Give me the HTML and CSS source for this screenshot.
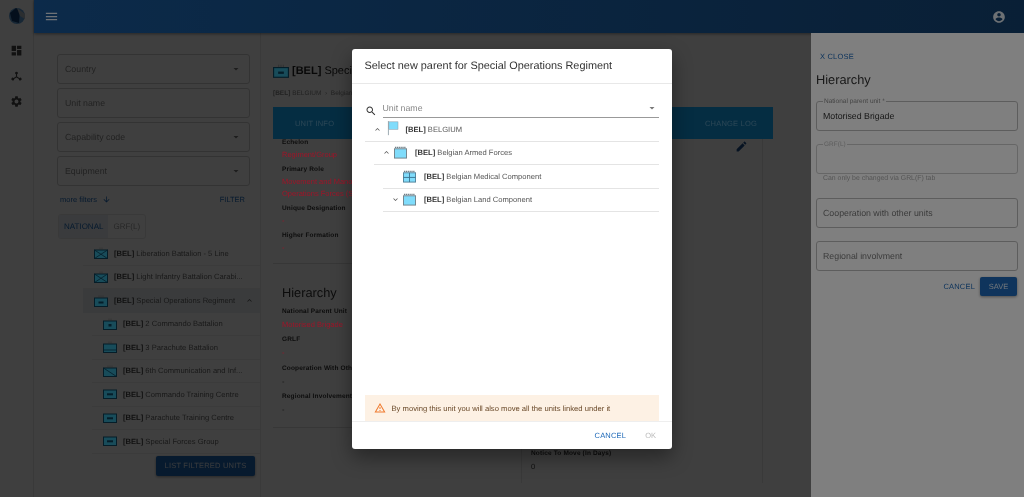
FILE: index.html
```html
<!DOCTYPE html>
<html lang="en">
<head>
    <meta charset="UTF-8">
    <title>Hierarchy - Select new parent</title>
    <link rel="stylesheet" href="styles.css">
</head>
<body>
    <svg class="defs" width="0" height="0">
        <symbol id="caret" viewBox="0 0 24 24"><path d="M7 10l5 5 5-5z"/></symbol>
        <symbol id="less" viewBox="0 0 24 24"><path d="M12 8l-6 6 1.41 1.41L12 10.83l4.59 4.58L18 14z"/></symbol>
        <symbol id="more" viewBox="0 0 24 24"><path d="M16.59 8.59L12 13.17 7.41 8.59 6 10l6 6 6-6z"/></symbol>
        <symbol id="unit-x" viewBox="0 0 14 12"><rect x=".5" y="3" width="13" height="8.5" fill="#3098b4" stroke="#0a3a50"/><path d="M.5 3l13 8.5M13.5 3L.5 11.5" stroke="#0a3a50" stroke-width=".8"/><path d="M6 .5v2M8 .5v2" stroke="#555" stroke-width=".6"/></symbol>
        <symbol id="unit-sof" viewBox="0 0 14 12"><rect x=".5" y="3" width="13" height="8.5" fill="#3098b4" stroke="#0a3a50"/><rect x="4.5" y="6.5" width="5" height="2" fill="#0a3a50"/><path d="M5 .5v2M7 .5v2M9 .5v2" stroke="#555" stroke-width=".6"/></symbol>
        <symbol id="unit-bn" viewBox="0 0 14 12"><rect x=".5" y="3" width="13" height="8.5" fill="#3098b4" stroke="#0a3a50"/><rect x="5.5" y="6" width="3" height="2.5" fill="#0a3a50"/><path d="M6 .5v2M8 .5v2" stroke="#555" stroke-width=".6"/></symbol>
        <symbol id="unit-para" viewBox="0 0 14 12"><rect x=".5" y="3" width="13" height="8.5" fill="#3098b4" stroke="#0a3a50"/><path d="M.5 9h13" stroke="#0a3a50" stroke-width=".8"/><path d="M6 .5v2M8 .5v2" stroke="#555" stroke-width=".6"/></symbol>
        <symbol id="unit-sig" viewBox="0 0 14 12"><rect x=".5" y="3" width="13" height="8.5" fill="#3098b4" stroke="#0a3a50"/><path d="M.5 3l13 8.5" stroke="#0a3a50" stroke-width=".8"/><path d="M5 .5v2M7 .5v2M9 .5v2" stroke="#555" stroke-width=".6"/></symbol>
        <symbol id="unit-train" viewBox="0 0 14 12"><rect x=".5" y="2" width="13" height="8.5" fill="#3098b4" stroke="#0a3a50"/><rect x="4" y="5.3" width="6" height="2" fill="#0a3a50"/></symbol>
        <symbol id="nation" viewBox="0 0 14 18"><rect x="2" y="1" width="11" height="9" fill="#80dcfb" stroke="#8a9aa3" stroke-width=".6"/><path d="M1.5 0v17" stroke="#8a9aa3" stroke-width="1"/></symbol>
        <symbol id="force" viewBox="0 0 14 13"><rect x=".5" y="2.5" width="13" height="10" fill="#80dcfb" stroke="#6f7f88"/><path d="M1 1h12" stroke="#6f7f88" stroke-width="1.4" stroke-dasharray="1.4 .6"/></symbol>
        <symbol id="medical" viewBox="0 0 14 13"><rect x=".5" y="2.5" width="13" height="10" fill="#80dcfb" stroke="#4f7f98"/><path d="M1 1h12" stroke="#6f7f88" stroke-width="1.4" stroke-dasharray="1.4 .6"/><path d="M.5 7.5h13M7 2.5v10" stroke="#3a7390" stroke-width="1"/></symbol>
    </svg>

    <div class="app">
        <aside class="rail">
            <svg class="logo" viewBox="0 0 16 16"><circle cx="8" cy="8" r="8" fill="#5f9ed6"/><path d="M1 5l6-5 4 3-1 12-7-2z" fill="#123f73"/><path d="M8 0l8 6v5l-5-3z" fill="#aeb8c2"/></svg>
            <svg class="rail-icon" viewBox="0 0 24 24"><path d="M3 13h8V3H3v10zm0 8h8v-6H3v6zm10 0h8V11h-8v10zm0-18v6h8V3h-8z"/></svg>
            <svg class="rail-icon" viewBox="0 0 24 24"><path d="M12 3a2.6 2.6 0 0 1 1 5v4.2l4.3 2.5a2.6 2.6 0 1 1-1 1.7L12 13.9l-4.3 2.5a2.6 2.6 0 1 1-1-1.7l4.3-2.5V8a2.6 2.6 0 0 1 1-5z"/></svg>
            <svg class="rail-icon" viewBox="0 0 24 24"><path d="M19.14 12.94c.04-.3.06-.61.06-.94 0-.32-.02-.64-.07-.94l2.03-1.58c.18-.14.23-.41.12-.61l-1.92-3.32c-.12-.22-.37-.29-.59-.22l-2.39.96c-.5-.38-1.03-.7-1.62-.94l-.36-2.54c-.04-.24-.24-.41-.48-.41h-3.84c-.24 0-.43.17-.47.41l-.36 2.54c-.59.24-1.13.57-1.62.94l-2.39-.96c-.22-.08-.47 0-.59.22L2.74 8.87c-.12.21-.08.47.12.61l2.03 1.58c-.05.3-.09.63-.09.94s.02.64.07.94l-2.03 1.58c-.18.14-.23.41-.12.61l1.92 3.32c.12.22.37.29.59.22l2.39-.96c.5.38 1.03.7 1.62.94l.36 2.54c.05.24.24.41.48.41h3.84c.24 0 .44-.17.47-.41l.36-2.54c.59-.24 1.13-.56 1.62-.94l2.39.96c.22.08.47 0 .59-.22l1.92-3.32c.12-.22.07-.47-.12-.61l-2.01-1.58zM12 15.6c-1.98 0-3.6-1.62-3.6-3.6s1.62-3.6 3.6-3.6 3.6 1.62 3.6 3.6-1.62 3.6-3.6 3.6z"/></svg>
        </aside>

        <div class="page">
            <header class="topbar">
                <svg class="menu-icon" viewBox="0 0 24 24"><path d="M3 18h18v-2H3v2zm0-5h18v-2H3v2zm0-7v2h18V6H3z"/></svg>
                <svg class="user-icon" viewBox="0 0 24 24"><path d="M12 2C6.48 2 2 6.48 2 12s4.48 10 10 10 10-4.48 10-10S17.52 2 12 2zm0 3c1.66 0 3 1.34 3 3s-1.34 3-3 3-3-1.34-3-3 1.34-3 3-3zm0 14.2c-2.5 0-4.71-1.28-6-3.22.03-1.99 4-3.08 6-3.08 1.99 0 5.97 1.09 6 3.08-1.29 1.94-3.5 3.22-6 3.22z"/></svg>
            </header>

            <div class="workspace">
                <section class="filters">
                    <div class="field"><span>Country</span><svg class="caret"><use href="#caret"/></svg></div>
                    <div class="field"><span>Unit name</span></div>
                    <div class="field"><span>Capability code</span><svg class="caret"><use href="#caret"/></svg></div>
                    <div class="field"><span>Equipment</span><svg class="caret"><use href="#caret"/></svg></div>
                    <div class="filter-links">
                        <span class="more-filters">more filters
                            <svg viewBox="0 0 24 24"><path d="M20 12l-1.41-1.41L13 16.17V4h-2v12.17l-5.58-5.59L4 12l8 8 8-8z"/></svg>
                        </span>
                        <span class="filter-btn">FILTER</span>
                    </div>
                    <div class="toggle">
                        <span class="toggle-on">NATIONAL</span>
                        <span>GRF(L)</span>
                    </div>
                    <ul class="unit-list">
                        <li class="unit"><svg class="unit-icon"><use href="#unit-x"/></svg><span><b>[BEL]</b> Liberation Battalion - 5 Line</span></li>
                        <li class="unit"><svg class="unit-icon"><use href="#unit-x"/></svg><span><b>[BEL]</b> Light Infantry Battalion Carabi...</span></li>
                        <li class="unit unit-open"><svg class="unit-icon"><use href="#unit-sof"/></svg><span><b>[BEL]</b> Special Operations Regiment</span><svg class="unit-chevron"><use href="#less"/></svg></li>
                        <li class="unit unit-child"><svg class="unit-icon"><use href="#unit-bn"/></svg><span><b>[BEL]</b> 2 Commando Battalion</span></li>
                        <li class="unit unit-child"><svg class="unit-icon"><use href="#unit-para"/></svg><span><b>[BEL]</b> 3 Parachute Battalion</span></li>
                        <li class="unit unit-child"><svg class="unit-icon"><use href="#unit-sig"/></svg><span><b>[BEL]</b> 6th Communication and Inf...</span></li>
                        <li class="unit unit-child"><svg class="unit-icon"><use href="#unit-train"/></svg><span><b>[BEL]</b> Commando Training Centre</span></li>
                        <li class="unit unit-child"><svg class="unit-icon"><use href="#unit-train"/></svg><span><b>[BEL]</b> Parachute Training Centre</span></li>
                        <li class="unit unit-child"><svg class="unit-icon"><use href="#unit-train"/></svg><span><b>[BEL]</b> Special Forces Group</span></li>
                    </ul>
                    <div class="list-btn">LIST FILTERED UNITS</div>
                </section>

                <section class="details">
                    <h1 class="unit-title"><svg class="title-icon"><use href="#unit-sof"/></svg><span><b>[BEL]</b> Special Operations Regiment</span></h1>
                    <div class="crumbs"><b>[BEL]</b> BELGIUM &nbsp;›&nbsp; Belgian Armed Forces</div>
                    <div class="tabs"><span>UNIT INFO</span><span>CHANGE LOG</span></div>
                    <div class="info-grid">
                        <div class="info-col">
                            <div class="info-block">
                                <h4>Echelon</h4>
                                <p class="red">Regiment/Group</p>
                                <h4>Primary Role</h4>
                                <p class="red">Movement and Manoeuvre<br>Operations Forces (SOF)</p>
                                <h4>Unique Designation</h4>
                                <p class="red">-</p>
                                <h4>Higher Formation</h4>
                                <p class="red">-</p>
                            </div>
                            <div class="info-block hierarchy">
                                <h2>Hierarchy</h2>
                                <h4>National Parent Unit</h4>
                                <p class="red">Motorised Brigade</p>
                                <h4>GRLF</h4>
                                <p class="red">-</p>
                                <h4>Cooperation With Other Units</h4>
                                <p>-</p>
                                <h4>Regional Involvement</h4>
                                <p>-</p>
                            </div>
                        </div>
                        <div class="info-side">
                            <svg class="edit-icon" viewBox="0 0 24 24"><path d="M3 17.25V21h3.75L17.81 9.94l-3.75-3.75L3 17.25zM20.71 7.04c.39-.39.39-1.02 0-1.41l-2.34-2.34c-.39-.39-1.02-.39-1.41 0l-1.83 1.83 3.75 3.75 1.83-1.83z"/></svg>
                            <div class="notice">
                                <h4>Notice To Move (In Days)</h4>
                                <p>0</p>
                            </div>
                        </div>
                    </div>
                </section>
            </div>
        </div>

        <div class="scrim scrim-low"></div>

        <aside class="drawer">
            <a class="close-link">X CLOSE</a>
            <h2>Hierarchy</h2>
            <div class="outlined"><label>National parent unit *</label><span class="value">Motorised Brigade</span></div>
            <div class="outlined outlined-off"><label>GRF(L)</label></div>
            <small>Can only be changed via GRL(F) tab</small>
            <div class="outlined"><span>Cooperation with other units</span></div>
            <div class="outlined"><span>Regional involvment</span></div>
            <div class="drawer-actions">
                <span class="text-btn">CANCEL</span>
                <span class="save-btn">SAVE</span>
            </div>
        </aside>

        <div class="scrim scrim-top"></div>

        <div class="dialog">
            <div class="dialog-title">Select new parent for Special Operations Regiment</div>
            <div class="dialog-body">
                <div class="search">
                    <svg class="search-icon" viewBox="0 0 24 24"><path d="M15.5 14h-.79l-.28-.27C15.41 12.59 16 11.11 16 9.5 16 5.91 13.09 3 9.5 3S3 5.91 3 9.5 5.91 16 9.5 16c1.61 0 3.09-.59 4.23-1.57l.27.28v.79l5 4.99L20.49 19l-4.99-5zm-6 0C7.01 14 5 11.99 5 9.5S7.01 5 9.5 5 14 7.01 14 9.5 11.99 14 9.5 14z"/></svg>
                    <div class="search-input"><span>Unit name</span><svg class="caret"><use href="#caret"/></svg></div>
                </div>
                <ul class="tree">
                    <li class="tree-row"><svg class="tree-chevron"><use href="#less"/></svg><svg class="tree-flag"><use href="#nation"/></svg><span><b>[BEL]</b> BELGIUM</span></li>
                    <li class="tree-row level-1"><svg class="tree-chevron"><use href="#less"/></svg><svg class="tree-icon"><use href="#force"/></svg><span><b>[BEL]</b> Belgian Armed Forces</span></li>
                    <li class="tree-row level-2"><span class="tree-chevron"></span><svg class="tree-icon"><use href="#medical"/></svg><span><b>[BEL]</b> Belgian Medical Component</span></li>
                    <li class="tree-row level-2"><svg class="tree-chevron"><use href="#more"/></svg><svg class="tree-icon"><use href="#force"/></svg><span><b>[BEL]</b> Belgian Land Component</span></li>
                </ul>
                <div class="alert">
                    <svg viewBox="0 0 24 24"><path d="M1 21h22L12 2 1 21zm3.47-2L12 5.99 19.53 19H4.47zM11 16h2v2h-2zm0-6h2v4h-2z"/></svg>
                    <span>By moving this unit you will also move all the units linked under it</span>
                </div>
            </div>
            <div class="dialog-actions">
                <span class="text-btn">CANCEL</span>
                <span class="ok-btn">OK</span>
            </div>
        </div>
    </div>
</body>
</html>
```

FILE: styles.css
```css
/* General */
html, body {
    margin: 0;
    padding: 0;
    height: 497px;
    overflow: hidden;
}

body {
    font-family: "Liberation Sans", Arial, sans-serif;
    color: #333;
    background: white;
    text-rendering: geometricPrecision;
}

.defs {
    position: absolute;
}

.app {
    position: relative;
    display: flex;
    width: 1024px;
    height: 497px;
    overflow: hidden;
    background: white;
    filter: blur(0.45px);
}

.scrim {
    position: absolute;
    inset: 0;
    background: rgba(0, 0, 0, 0.5);
}

.scrim-low {
    z-index: 1;
}

.scrim-top {
    z-index: 3;
}

/* Rail */
.rail {
    width: 34px;
    flex: none;
    display: flex;
    flex-direction: column;
    align-items: center;
    border-right: 1px solid #e4e4e4;
    box-sizing: border-box;
}

.logo {
    width: 16px;
    height: 16px;
    margin: 8px 0 20px;
}

.rail-icon {
    width: 13px;
    height: 13px;
    margin-bottom: 12.5px;
    fill: #444;
}

/* Top bar */
.page {
    flex: 1;
    display: flex;
    flex-direction: column;
    min-width: 0;
}

.topbar {
    position: relative;
    z-index: 2;
    height: 33px;
    flex: none;
    display: flex;
    align-items: center;
    justify-content: space-between;
    padding: 0 8px 0 10px;
    background: linear-gradient(to right, #185594, #133f6c);
    box-shadow: 0 1px 3px rgba(0, 0, 0, 0.4);
}

.menu-icon {
    width: 15px;
    height: 15px;
    fill: white;
    opacity: 0.85;
}

.user-icon {
    width: 14px;
    height: 14px;
    fill: white;
    opacity: 0.85;
    margin-right: 10px;
}

.workspace {
    flex: 1;
    display: flex;
    min-height: 0;
}

/* Filters */
.filters {
    width: 227px;
    flex: none;
    box-sizing: border-box;
    padding: 21px 10px 0 23px;
    border-right: 1px solid #e8e8e8;
}

.field {
    height: 30px;
    box-sizing: border-box;
    margin-bottom: 4px;
    padding: 0 7px;
    display: flex;
    align-items: center;
    justify-content: space-between;
    border: 1px solid #ccc;
    border-radius: 3px;
    font-size: 8.8px;
    color: #888;
}

.caret {
    width: 12px;
    height: 12px;
    fill: #777;
    flex: none;
}

.filter-links {
    display: flex;
    align-items: center;
    justify-content: space-between;
    height: 18px;
    padding: 0 5px 0 3px;
    margin-top: 3px;
    font-size: 7.5px;
    color: #1e69b8;
}

.more-filters {
    display: flex;
    align-items: center;
    gap: 5px;
}

.more-filters svg {
    width: 9px;
    height: 9px;
    fill: #1e69b8;
}

.toggle {
    display: inline-flex;
    height: 25px;
    margin: 6px 0 0 1px;
    font-size: 8px;
    color: #999;
    border: 1px solid #e4e4e4;
    border-radius: 3px;
    box-sizing: border-box;
}

.toggle span {
    display: flex;
    align-items: center;
    padding: 0 5px;
}

.toggle .toggle-on {
    background: #e8eef5;
    color: #1e69b8;
}

.unit-list {
    list-style: none;
    margin: 3px -10px 0 26px;
    padding: 0;
}

.unit {
    height: 23.5px;
    box-sizing: border-box;
    display: flex;
    align-items: center;
    gap: 6px;
    padding-left: 11px;
    font-size: 7.6px;
    color: #666;
    border-bottom: 1px solid #eee;
    white-space: nowrap;
}

.unit b {
    color: #444;
}

.unit-open {
    background: #e8eef3;
    border-bottom: none;
}

.unit-child {
    margin-left: 9px;
}

.unit-icon {
    position: relative;
    z-index: 2;
    width: 14px;
    height: 12px;
    flex: none;
}

.unit-chevron {
    width: 9px;
    height: 9px;
    fill: #555;
    margin-left: auto;
    margin-right: 6px;
}

.list-btn {
    width: 99px;
    height: 20px;
    margin: 2px 0 0 99px;
    display: flex;
    align-items: center;
    justify-content: center;
    background: #1e69b8;
    border-radius: 2px;
    color: rgba(255, 255, 255, 0.85);
    font-size: 7.5px;
    letter-spacing: 0.2px;
    box-shadow: 0 1px 3px rgba(0, 0, 0, 0.4);
}

/* Details */
.details {
    flex: 1;
    min-width: 0;
    padding: 0 0 0 12px;
}

.unit-title {
    display: flex;
    align-items: center;
    gap: 3px;
    height: 24px;
    margin: 26px 0 0;
    font-size: 11px;
    font-weight: normal;
    color: #222;
    white-space: nowrap;
}

.title-icon {
    position: relative;
    z-index: 2;
    width: 16px;
    height: 14px;
}

.crumbs {
    margin-top: 7px;
    height: 17px;
    font-size: 6.5px;
    color: #888;
}

.tabs {
    position: relative;
    z-index: 2;
    width: 500px;
    height: 32px;
    display: flex;
    align-items: center;
    justify-content: space-between;
    padding: 0 16px 0 22px;
    box-sizing: border-box;
    background: #0a5a85;
    color: rgba(255, 255, 255, 0.3);
    font-size: 7.5px;
    letter-spacing: 0.2px;
}

.info-grid {
    display: flex;
    width: 490px;
    height: 345px;
    margin-top: -1px;
}

.info-col {
    width: 248px;
    flex: none;
}

.info-block {
    padding: 0 0 4.5px 9px;
    border-bottom: 1px solid #ddd;
}

.info-block h4,
.notice h4 {
    margin: 0;
    height: 9px;
    line-height: 9px;
    font-size: 6.5px;
    letter-spacing: 0.15px;
    color: #333;
    white-space: nowrap;
}

.info-block p,
.notice p {
    margin: 0 0 4.5px;
    padding-top: 1.5px;
    line-height: 12px;
    font-size: 7.5px;
    color: #444;
    white-space: nowrap;
}

/* the dimmed red values keep their tone over both scrims */
.red {
    position: relative;
    z-index: 4;
    color: #a01428 !important;
}

.hierarchy {
    padding-top: 21px;
    padding-bottom: 6.5px;
}

.hierarchy h2 {
    margin: 0 0 7px;
    font-size: 12.8px;
    line-height: 15px;
    font-weight: normal;
    color: #333;
}

.hierarchy p {
    margin-bottom: 4.5px;
    padding-top: 2px;
    line-height: 13px;
}

.info-side {
    flex: 1;
    display: flex;
    flex-direction: column;
    align-items: flex-end;
    border-left: 1px solid #e4e4e4;
    border-right: 1px solid #e4e4e4;
}

.edit-icon {
    width: 13px;
    height: 13px;
    fill: #1e4f8a;
    margin: 2px 14px 0 0;
}

.notice {
    align-self: flex-start;
    margin: 296px 0 0 9px;
}

.notice p {
    padding-top: 3px;
}

/* Drawer */
.drawer {
    position: absolute;
    z-index: 2;
    top: 33px;
    right: 0;
    bottom: 0;
    width: 213px;
    box-sizing: border-box;
    padding: 19px 6px 0 5px;
    background: white;
}

.close-link {
    display: block;
    margin-left: 4px;
    font-size: 7.5px;
    color: #1e69b8;
    letter-spacing: 0.2px;
}

.drawer h2 {
    margin: 10.5px 0 14.5px;
    font-size: 12.8px;
    line-height: 15px;
    font-weight: normal;
    color: #333;
}

.outlined {
    position: relative;
    height: 30px;
    box-sizing: border-box;
    margin-bottom: 13px;
    padding: 0 6px 1px;
    display: flex;
    align-items: center;
    border: 1px solid #bbb;
    border-radius: 3px;
    font-size: 8.8px;
    color: #777;
}

.outlined .value {
    color: #333;
}

.outlined label {
    position: absolute;
    top: -4px;
    left: 6px;
    padding: 0 1px;
    background: white;
    font-size: 6.5px;
    line-height: 7px;
    color: #888;
}

.outlined-off {
    margin-bottom: 1px;
    border-color: #ccc;
}

.outlined-off label {
    color: #bbb;
}

.drawer small {
    display: block;
    height: 23px;
    margin-left: 7px;
    font-size: 6.9px;
    color: #aaa;
}

.drawer-actions {
    display: flex;
    align-items: center;
    justify-content: flex-end;
    gap: 5px;
    margin: -7px 1px 0 0;
}

.text-btn {
    font-size: 7.5px;
    color: #1e69b8;
    letter-spacing: 0.2px;
}

.save-btn {
    width: 37px;
    height: 19px;
    display: flex;
    align-items: center;
    justify-content: center;
    background: #1e69b8;
    color: rgba(255, 255, 255, 0.85);
    border-radius: 2px;
    font-size: 7.5px;
    box-shadow: 0 1px 3px rgba(0, 0, 0, 0.4);
}

/* Dialog */
.dialog {
    position: absolute;
    z-index: 4;
    top: 49px;
    left: 352px;
    width: 320px;
    height: 400px;
    display: flex;
    flex-direction: column;
    background: white;
    border-radius: 3px;
    box-shadow: 0 8px 20px rgba(0, 0, 0, 0.4);
}

.dialog-title {
    height: 35px;
    flex: none;
    box-sizing: border-box;
    padding-left: 12.5px;
    display: flex;
    align-items: center;
    font-size: 10.9px;
    color: #333;
    border-bottom: 1px solid #e8e8e8;
}

.dialog-body {
    flex: 1;
    min-height: 0;
    display: flex;
    flex-direction: column;
    padding: 0 13px 0 12.5px;
}

.search {
    display: flex;
    align-items: flex-end;
    gap: 6px;
    height: 34px;
    flex: none;
}

.search-icon {
    width: 12px;
    height: 12px;
    margin-bottom: 1px;
    fill: #333;
}

.search-input {
    flex: 1;
    height: 18px;
    display: flex;
    align-items: center;
    justify-content: space-between;
    border-bottom: 1px solid #999;
    font-size: 8.8px;
    color: #888;
    padding-right: 1px;
}

.tree {
    list-style: none;
    margin: 0;
    padding: 0;
    flex: 1;
}

.tree-row {
    height: 23.5px;
    box-sizing: border-box;
    display: flex;
    align-items: center;
    font-size: 7.6px;
    color: #555;
    border-bottom: 1px solid #e4e4e4;
    white-space: nowrap;
}

.tree-row b {
    color: #333;
}

.level-1 {
    margin-left: 9px;
}

.level-2 {
    margin-left: 18px;
}

.tree-chevron {
    display: block;
    width: 9px;
    height: 9px;
    margin-left: 8px;
    fill: #555;
    flex: none;
}

.tree-flag {
    width: 12px;
    height: 15px;
    margin: -2px 7px 0 5px;
    flex: none;
}

.tree-icon {
    width: 13px;
    height: 13px;
    margin: 0 8px 0 3.5px;
    flex: none;
}

.alert {
    height: 26px;
    flex: none;
    display: flex;
    align-items: center;
    gap: 6px;
    padding-left: 9px;
    background: #fdf1e4;
    font-size: 7.65px;
    color: #6a4a2a;
}

.alert svg {
    width: 12px;
    height: 12px;
    fill: #ef7a2e;
}

.dialog-actions {
    height: 28px;
    flex: none;
    box-sizing: border-box;
    display: flex;
    align-items: center;
    justify-content: flex-end;
    gap: 19px;
    padding-right: 16px;
    border-top: 1px solid #eee;
}

.ok-btn {
    font-size: 7.5px;
    color: #bbb;
}
```
